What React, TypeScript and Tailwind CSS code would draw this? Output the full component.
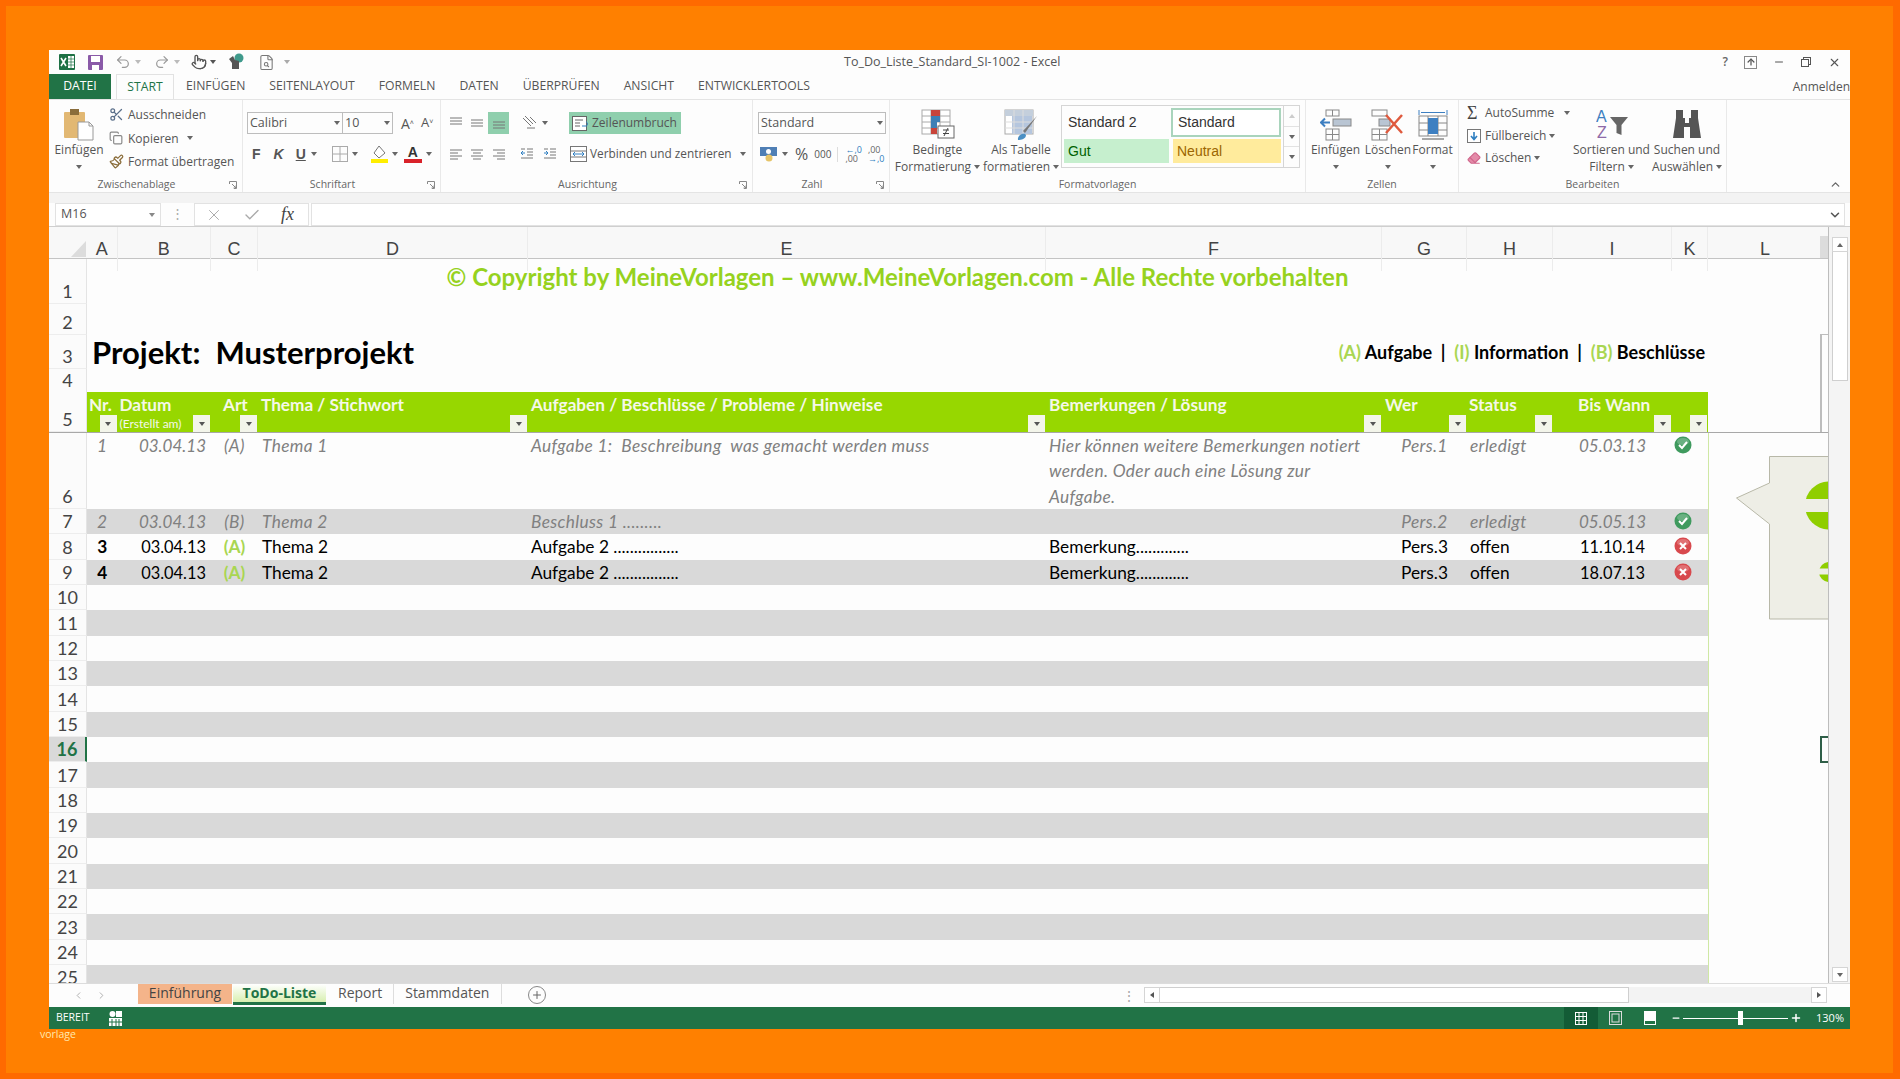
import React from "react";
import { Scissors, Copy, Paintbrush, FileSearch, Undo2, Redo2, Pointer, X, Check, ChevronUp, ChevronDown, Plus, Eraser, ChevronLeft, ChevronRight, Minus, ArrowUp } from "lucide-react";

const G = "grid grid-cols-[38px_30.5px_93.5px_47px_270px_518px_336px_85px_86px_119px_36px_121px]";

const Caret = ({ c = "#666", className = "" }: { c?: string; className?: string }) => (
  <svg width="6" height="4" viewBox="0 0 6 4" className={className}><path d="M0 0H6L3 4Z" fill={c} /></svg>
);

const Lines = ({ ys, x = [[1, 13]] }: { ys: number[]; x?: number[][] }) => (
  <svg width="14" height="14" viewBox="0 0 14 14" stroke="#777" strokeWidth="1" fill="none">
    {ys.map((y, i) => { const p = x[i % x.length]; return <path key={i} d={`M${p[0]} ${y}H${p[1]}`} />; })}
  </svg>
);

const Label = ({ t, exp = true }: { t: string; exp?: boolean }) => (
  <div className="flex h-[14px] items-center text-[10.5px] text-[#666]">
    <div className="flex-1 text-center">{t}</div>
    {exp && (
      <div className="flex w-[18px] justify-center">
        <svg width="8" height="8" viewBox="0 0 8 8" fill="none" stroke="#888"><path d="M0.5 3V0.5H7.5V7.5H5M3 3L7 7M4.5 7H7V4.5" /></svg>
      </div>
    )}
  </div>
);

const Big = ({ w, icon, a, b }: { w: string; icon: React.ReactNode; a: string; b?: string }) => (
  <div className={`${w} flex shrink-0 flex-col items-center whitespace-nowrap text-[12px] leading-[17px] text-[#555]`}>
    <div className="mt-[9px] flex h-[32px] items-start justify-center">{icon}</div>
    <div>{a}</div>
    {b ? <div className="flex items-center gap-[3px]">{b}<Caret /></div> : <div className="flex h-[17px] items-center"><Caret /></div>}
  </div>
);

const PasteIcon = () => (
  <svg width="30" height="32" viewBox="0 0 30 32">
    <rect x="0" y="3" width="21" height="26" rx="1" fill="#e2b873" />
    <rect x="6" y="0" width="9" height="6" fill="#8a6d3b" />
    <path d="M14 13H25L29 17V31H14Z" fill="#fff" stroke="#999" />
    <path d="M25 13V17H29" fill="none" stroke="#999" />
  </svg>
);

const CondIcon = () => (
  <svg width="34" height="30" viewBox="0 0 34 30">
    <g stroke="#aaa" fill="#fff"><rect x="1" y="1" width="28" height="24" /><path d="M10 1V25M19 1V25M1 7H29M1 13H29M1 19H29" fill="none" /></g>
    <rect x="10" y="1" width="9" height="6" fill="#c8443a" /><rect x="10" y="7" width="9" height="6" fill="#3c7fb5" /><rect x="10" y="13" width="6" height="6" fill="#3c7fb5" /><rect x="10" y="19" width="6" height="6" fill="#c8443a" />
    <rect x="17" y="17" width="16" height="12" fill="#fff" stroke="#666" /><path d="M22 21H28M22 24.5H28M27 19L23 27" stroke="#444" fill="none" />
  </svg>
);

const TableIcon = () => (
  <svg width="34" height="32" viewBox="0 0 34 32">
    <rect x="1" y="1" width="28" height="24" fill="#fff" stroke="#aaa" />
    <rect x="1" y="1" width="28" height="6" fill="#c4cfdc" />
    <rect x="8" y="7" width="20" height="18" fill="#b5c6de" />
    <path d="M10 1V25M19 1V25M1 13H29M1 19H29" stroke="#ddd" fill="none" />
    <path d="M33 7L21 24L19 22Z" fill="#777" />
    <path d="M14 31C13 26 20 23 22 26C22 30 17 31 14 31Z" fill="#4a8fc4" />
  </svg>
);

const InsIcon = () => (
  <svg width="32" height="32" viewBox="0 0 32 32" fill="none" stroke="#888">
    <rect x="6" y="1" width="13" height="6" /><path d="M12.5 1V7" />
    <rect x="6" y="20" width="13" height="11" /><path d="M12.5 20V31M6 25.5H19" />
    <path d="M10 13.5H1M5 9.5L1 13.5L5 17.5" stroke="#3d7fc1" strokeWidth="2" />
    <rect x="13" y="10" width="18" height="7" fill="#b9c5d3" />
  </svg>
);
const DelIcon = () => (
  <svg width="34" height="32" viewBox="0 0 34 32" fill="none" stroke="#888">
    <rect x="1" y="1" width="15" height="6" /><rect x="1" y="20" width="15" height="11" /><path d="M8.5 20V31M1 25.5H16" />
    <rect x="8" y="10" width="11" height="7" fill="#b9c5d3" />
    <path d="M15 6L31 24M31 6L15 24" stroke="#df5a3e" strokeWidth="2.5" />
  </svg>
);
const FmtIcon = () => (
  <svg width="30" height="32" viewBox="0 0 30 32" fill="none" stroke="#888">
    <path d="M1 1V6M29 1V6M3 3.5H27" stroke="#3d7fc1" />
    <rect x="1" y="7" width="28" height="20" /><path d="M1 14H29M1 21H29M10 7V27M20 7V27" />
    <rect x="10" y="9" width="10" height="16" fill="#3d7fc1" stroke="none" />
    <path d="M4 30H26" stroke="#555" />
  </svg>
);
const SortIcon = () => (
  <svg width="32" height="30" viewBox="0 0 32 30">
    <text x="0" y="13" fontSize="16" fontFamily="'Liberation Sans',sans-serif" fill="#3d7fc1">A</text>
    <text x="1" y="29" fontSize="16" fontFamily="'Liberation Sans',sans-serif" fill="#8e6aa8">Z</text>
    <path d="M14 8H32L25.5 16V26L20.5 24V16Z" fill="#666" />
  </svg>
);
const BinIcon = () => (
  <svg width="30" height="30" viewBox="0 0 30 30" fill="#555">
    <path d="M4 1H11V9H13V14H17V9H19V1H26V9L29 29H18V18H12V29H1L4 9Z" />
  </svg>
);

const Filter = () => (
  <div className="absolute bottom-0 right-[1px] flex h-[17px] w-[17px] items-center justify-center bg-[#f3f5ea]"><Caret c="#555" /></div>
);

const Status = ({ ok }: { ok: boolean }) => (
  <svg width="18" height="18" viewBox="0 0 18 18">
    <circle cx="9" cy="9" r="8.5" fill={ok ? "#3f9a5e" : "#d8494d"} />
    <ellipse cx="9" cy="5.5" rx="6" ry="3.6" fill="#fff" opacity=".22" />
    {ok ? <path d="M5 9L8 12L13 6" stroke="#fff" strokeWidth="2" fill="none" /> : <path d="M6 6L12 12M12 6L6 12" stroke="#fff" strokeWidth="2" fill="none" />}
  </svg>
);

const Num = ({ n }: { n: number }) => (
  <div className={`flex items-end justify-center border-b border-[#ededed] pb-[1px] text-[18px] leading-[22px] ${n === 16 ? "border-r-2 border-r-[#217346] bg-[#d9d9d9] font-bold text-[#217346]" : "border-r border-r-[#e4e4e4] bg-[#fbfbfb] text-[#444]"}`}>{n}</div>
);

const LCell = () => <div className="border-l border-[#cfe8a4]" />;

const DataRow = (p: { n: number; h: string; gray?: boolean; muted?: boolean; nr: string; date: string; art: string; thema: string; task: string; note: React.ReactNode; who: string; status: string; due: string; ok: boolean; tall?: boolean }) => {
  const align = p.tall ? "items-start" : "items-center";
  const tone = p.muted ? "italic text-[#808080] tracking-[0.35px]" : "text-black";
  const num = p.muted ? "text-[17px] tracking-normal" : "text-[16.4px]";
  return (
    <div className={`${G} ${p.h}`}>
      <Num n={p.n} />
      <div className={`col-span-10 grid grid-cols-subgrid text-[17.3px] leading-[25.4px] ${tone} ${p.gray ? "bg-[#d9d9d9]" : ""}`}>
        <div className={`flex justify-center ${align} ${p.muted ? "" : "font-bold"}`}>{p.nr}</div>
        <div className={`flex justify-end pr-[5px] ${num} ${align}`}>{p.date}</div>
        <div className={`flex justify-center ${align} ${p.muted ? "" : "font-bold text-[#a9d651]"}`}>{p.art}</div>
        <div className={`flex pl-[4px] ${align}`}>{p.thema}</div>
        <div className={`flex whitespace-pre pl-[3px] ${align}`}>{p.task}</div>
        <div className={`flex pl-[3px] ${align}`}><div>{p.note}</div></div>
        <div className={`flex justify-center ${align}`}>{p.who}</div>
        <div className={`flex pl-[3px] ${align}`}>{p.status}</div>
        <div className={`flex justify-center ${num} ${align}`}>{p.due}</div>
        <div className="flex items-start pl-[2px] pt-[3px]"><Status ok={p.ok} /></div>
      </div>
      <LCell />
    </div>
  );
};

const BLANK = [10, 11, 12, 13, 14, 15, 16, 17, 18, 19, 20, 21, 22, 23, 24, 25];

export default function App() {
  return (
    <div className="h-[1079px] w-[1900px] overflow-hidden border-[6px] border-r-[7px] border-[#ff6a00] bg-[#ff8000] pl-[43px] pt-[44px] font-['Open_Sans',sans-serif]">
      <div className="flex h-[979px] w-[1801px] flex-col bg-[#fdfdfd] text-[#555]">
        {/* Title bar */}
        <div className="relative flex h-[24px] shrink-0 items-center pl-[10px]">
          <svg width="16" height="16" viewBox="0 0 16 16"><rect width="16" height="16" rx="1" fill="#1e7145" /><rect x="9" y="2" width="6" height="12" fill="#fff" /><path d="M9 5H15M9 8H15M9 11H15M12 2V14" stroke="#1e7145" strokeWidth=".7" /><path d="M2 4L7 12M7 4L2 12" stroke="#fff" strokeWidth="1.6" /></svg>
          <svg className="ml-[13px]" width="15" height="15" viewBox="0 0 15 15"><rect width="15" height="15" rx="1" fill="#8a5aa8" /><rect x="3" y="1" width="9" height="6" fill="#fff" /><rect x="4" y="10" width="7" height="5" fill="#fff" /></svg>
          <Undo2 className="ml-[12px]" size={16} color="#999" strokeWidth={1.8} />
          <Caret c="#bbb" className="ml-[4px]" />
          <Redo2 className="ml-[13px]" size={16} color="#999" strokeWidth={1.8} />
          <Caret c="#bbb" className="ml-[4px]" />
          <Pointer className="ml-[11px]" size={16} color="#555" strokeWidth={2} />
          <Caret c="#555" className="ml-[3px]" />
          <svg className="ml-[11px]" width="18" height="18" viewBox="0 0 18 18"><circle cx="12" cy="5" r="4.5" fill="#3f9a8c" /><path d="M2 6L6 3L8 7L12 8V16H5V10Z" fill="#555" /></svg>
          <FileSearch className="ml-[13px]" size={17} color="#777" strokeWidth={1.5} />
          <Caret c="#aaa" className="ml-[9px]" />
          <div className="absolute left-[795px] whitespace-nowrap text-[12.5px] text-[#555]">To_Do_Liste_Standard_SI-1002 - Excel</div>
          <div className="ml-auto flex items-center pr-[9px]">
            <span className="mr-[16px] text-[12px] font-semibold text-[#666]">?</span>
            <div className="mr-[16px] flex h-[13px] w-[13px] items-center justify-center border border-[#888]"><ArrowUp size={10} color="#555" strokeWidth={3} /></div>
            <Minus size={12} color="#555" className="mr-[16px]" strokeWidth={2} />
            <svg className="mr-[17px]" width="10" height="10" viewBox="0 0 10 10" fill="#fdfdfd" stroke="#555"><rect x="2.5" y=".5" width="7" height="7" /><rect x=".5" y="2.5" width="7" height="7" /></svg>
            <X size={13} color="#555" strokeWidth={2} />
          </div>
        </div>
        {/* Tabs */}
        <div className="flex h-[25px] shrink-0 items-center text-[12.2px] text-[#555]">
          <div className="flex h-full w-[62px] items-center justify-center bg-[#217346] text-white">DATEI</div>
          <div className="ml-[5px] flex h-full w-[58px] items-center justify-center border border-b-0 border-[#e2e2e2] text-[#217346]">START</div>
          <div className="ml-[12px] flex items-center gap-[24px]">
            <span>EINFÜGEN</span><span>SEITENLAYOUT</span><span>FORMELN</span><span>DATEN</span><span>ÜBERPRÜFEN</span><span>ANSICHT</span><span>ENTWICKLERTOOLS</span>
          </div>
          <span className="ml-auto text-[12px]">Anmelden</span>
        </div>
        {/* Ribbon */}
        <div className="flex h-[94px] shrink-0 border-y border-[#e4e4e4] text-[12px]">
          {/* Zwischenablage */}
          <div className="flex w-[194px] flex-col border-r border-[#e9e9e9]">
            <div className="flex h-[78px]">
              <Big w="w-[60px]" icon={<PasteIcon />} a="Einfügen" />
              <div className="flex flex-col pt-[3px] text-[12px] leading-[23.5px]">
                <div className="flex items-center"><Scissors size={15} color="#5a6f8a" className="mr-[4px]" />Ausschneiden</div>
                <div className="flex items-center"><Copy size={14} color="#888" className="mr-[5px]" />Kopieren<Caret className="ml-[8px]" /></div>
                <div className="flex items-center"><Paintbrush size={15} color="#8a6d3b" className="mr-[4px]" />Format übertragen</div>
              </div>
            </div>
            <Label t="Zwischenablage" />
          </div>
          {/* Schriftart */}
          <div className="flex w-[198px] flex-col border-r border-[#e9e9e9]">
            <div className="h-[78px] pt-[12px]">
              <div className="flex h-[22px] items-center pl-[4px]">
                <div className="flex h-[22px] w-[96px] items-center justify-between border border-[#bdbdbd] px-[2px] text-[12.5px] text-[#555]">Calibri<Caret /></div>
                <div className="flex h-[22px] w-[50px] items-center justify-between border border-l-0 border-[#bdbdbd] px-[2px] text-[12.5px]">10<Caret /></div>
                <span className="ml-[8px] text-[14px]">A<sup className="text-[7px]">˄</sup></span>
                <span className="ml-[7px] text-[13px]">A<sup className="text-[7px]">˅</sup></span>
              </div>
              <div className="mt-[9px] flex h-[22px] items-center pl-[9px] font-['Liberation_Sans',sans-serif] text-[14px] font-bold text-[#555]">
                <span>F</span>
                <span className="ml-[13px] italic">K</span>
                <span className="ml-[12px] underline">U</span>
                <Caret className="ml-[5px]" />
                <svg className="ml-[15px]" width="16" height="16" viewBox="0 0 16 16" fill="none" stroke="#aaa"><rect x=".5" y=".5" width="15" height="15" /><path d="M8 0V16M0 8H16" /></svg>
                <Caret className="ml-[4px]" />
                <svg className="ml-[12px]" width="19" height="19" viewBox="0 0 19 19"><path d="M9 1L15 8L9 13L4 8Z" fill="#fff" stroke="#777" /><rect x="1" y="14" width="17" height="4" fill="#ffee00" /></svg>
                <Caret className="ml-[3px]" />
                <div className="ml-[6px] flex w-[18px] flex-col items-center text-[14px] leading-[14px] text-[#333]">A<div className="h-[4px] w-[18px] bg-[#d9222a]" /></div>
                <Caret className="ml-[4px]" />
              </div>
            </div>
            <Label t="Schriftart" />
          </div>
          {/* Ausrichtung */}
          <div className="flex w-[312px] flex-col border-r border-[#e9e9e9]">
            <div className="h-[78px] pt-[12px]">
              <div className="flex h-[22px] items-center pl-[8px]">
                <Lines ys={[2, 5, 8]} />
                <div className="ml-[7px]"><Lines ys={[4, 7, 10]} /></div>
                <div className="ml-[4px] flex h-[22px] w-[21px] items-center justify-center bg-[#8fcfad]"><Lines ys={[6, 9, 12]} /></div>
                <svg className="ml-[12px]" width="17" height="16" viewBox="0 0 17 16" fill="none" stroke="#777"><path d="M2 3L10 11M4 1L12 9M9 2L15 8M6 13L14 13" /></svg>
                <Caret className="ml-[4px]" />
                <div className="ml-[21px] flex h-[22px] w-[112px] items-center bg-[#8fcfad] pl-[3px] text-[12px]">
                  <svg width="18" height="15" viewBox="0 0 18 15" fill="#fff" stroke="#666" className="mr-[2px]"><rect x=".5" y=".5" width="14" height="14" /><path d="M3 4H11M3 7H8M3 10H8" fill="none" /><path d="M10 10H14C16 10 16 6 14 6" stroke="#2f7fc1" fill="none" /></svg>
                  Zeilenumbruch
                </div>
              </div>
              <div className="mt-[9px] flex h-[22px] items-center pl-[8px]">
                <Lines ys={[3, 6, 9, 12]} x={[[1, 13], [1, 9]]} />
                <div className="ml-[7px]"><Lines ys={[3, 6, 9, 12]} x={[[1, 13], [3, 11]]} /></div>
                <div className="ml-[8px]"><Lines ys={[3, 6, 9, 12]} x={[[1, 13], [5, 13]]} /></div>
                <svg className="ml-[14px]" width="14" height="14" viewBox="0 0 14 14" fill="none" stroke="#777"><path d="M7 2H13M7 5H13M7 8H13M1 11H13M1 2H5" /><path d="M5 6H1M3 4L1 6L3 8" stroke="#2f7fc1" /></svg>
                <svg className="ml-[9px]" width="14" height="14" viewBox="0 0 14 14" fill="none" stroke="#777"><path d="M7 2H13M7 5H13M7 8H13M1 11H13M1 2H5" /><path d="M1 6H5M3 4L5 6L3 8" stroke="#2f7fc1" /></svg>
                <svg className="ml-[13px]" width="17" height="16" viewBox="0 0 17 16" fill="#fff" stroke="#777"><rect x=".5" y=".5" width="16" height="15" /><path d="M0 5H17M0 11H17" /><path d="M3 8H14M5 6L3 8L5 10M12 6L14 8L12 10" stroke="#2f7fc1" fill="none" /></svg>
                <span className="ml-[3px] whitespace-nowrap text-[11.8px]">Verbinden und zentrieren</span>
                <Caret className="ml-[8px]" />
              </div>
            </div>
            <Label t="Ausrichtung" />
          </div>
          {/* Zahl */}
          <div className="flex w-[137px] flex-col border-r border-[#e9e9e9]">
            <div className="h-[78px] pt-[12px]">
              <div className="ml-[5px] flex h-[22px] w-[128px] items-center justify-between border border-[#bdbdbd] px-[2px] text-[12.5px]">Standard<Caret /></div>
              <div className="mt-[9px] flex h-[22px] items-center pl-[7px]">
                <svg width="17" height="16" viewBox="0 0 17 16"><rect y="1" width="17" height="9" fill="#4f7fb5" /><circle cx="8.5" cy="5.5" r="2.5" fill="#fff" /><circle cx="9" cy="12" r="3.5" fill="#e6c468" /></svg>
                <Caret className="ml-[5px]" />
                <span className="ml-[7px] text-[16px] leading-none">%</span>
                <span className="ml-[6px] text-[10px]">000</span>
                <div className="ml-[6px] h-[15px] w-px bg-[#ddd]" />
                <span className="ml-[7px] flex flex-col text-[9px] leading-[9px] text-[#2f7fc1]"><span>←,0</span><span className="text-[#666]">,00</span></span>
                <span className="ml-[6px] flex flex-col text-[9px] leading-[9px] text-[#666]"><span>,00</span><span className="text-[#2f7fc1]">→,0</span></span>
              </div>
            </div>
            <Label t="Zahl" />
          </div>
          {/* Formatvorlagen */}
          <div className="flex w-[416px] flex-col border-r border-[#e9e9e9]">
            <div className="flex h-[78px] pl-[4px]">
              <Big w="w-[87px]" icon={<CondIcon />} a="Bedingte" b="Formatierung" />
              <Big w="w-[80px]" icon={<TableIcon />} a="Als Tabelle" b="formatieren" />
              <div className="mt-[5px] flex h-[63px] w-[239px] border border-[#d5d5d5] font-['Liberation_Sans',sans-serif] text-[14px]">
                <div className="grid flex-1 grid-cols-[109px_110px] grid-rows-[29px_24px] gap-y-[2px] pt-[2px]">
                  <div className="flex items-center pl-[6px] text-[#333]">Standard 2</div>
                  <div className="flex items-center border-2 border-[#a9d4bc] bg-white pl-[5px] text-[#333]">Standard</div>
                  <div className="mx-[2px] flex items-center bg-[#c6efce] pl-[4px] text-[#006100]">Gut</div>
                  <div className="ml-[2px] flex items-center bg-[#ffeb9c] pl-[4px] text-[#9c6500]">Neutral</div>
                </div>
                <div className="flex w-[16px] flex-col border-l border-[#d5d5d5]">
                  <div className="flex flex-1 items-center justify-center border-b border-[#e2e2e2]"><Caret c="#ccc" className="rotate-180" /></div>
                  <div className="flex flex-1 items-center justify-center border-b border-[#e2e2e2]"><Caret /></div>
                  <div className="flex flex-1 items-center justify-center"><Caret /></div>
                </div>
              </div>
            </div>
            <Label t="Formatvorlagen" exp={false} />
          </div>
          {/* Zellen */}
          <div className="flex w-[153px] flex-col border-r border-[#e9e9e9]">
            <div className="flex h-[78px] pl-[4px]">
              <Big w="w-[51px]" icon={<InsIcon />} a="Einfügen" />
              <Big w="w-[54px]" icon={<DelIcon />} a="Löschen" />
              <Big w="w-[35px]" icon={<FmtIcon />} a="Format" />
            </div>
            <Label t="Zellen" exp={false} />
          </div>
          {/* Bearbeiten */}
          <div className="flex w-[268px] flex-col border-r border-[#e9e9e9]">
            <div className="flex h-[78px]">
              <div className="flex w-[114px] flex-col pl-[8px] pt-[2px] leading-[22.5px]">
                <div className="flex items-center"><span className="mr-[4px] w-[14px] font-['Liberation_Serif',serif] text-[18px] leading-none text-[#444]">Σ</span>AutoSumme<Caret className="ml-[10px]" /></div>
                <div className="flex items-center"><svg className="mr-[4px]" width="14" height="14" viewBox="0 0 14 14" fill="#fff" stroke="#777"><rect x=".5" y=".5" width="13" height="13" /><path d="M7 3V10M4 7L7 10.5L10 7" stroke="#2f7fc1" strokeWidth="1.6" fill="none" /></svg>Füllbereich<Caret className="ml-[3px]" /></div>
                <div className="flex items-center"><Eraser size={14} color="#d0678c" fill="#e48aa8" className="mr-[4px]" />Löschen<Caret className="ml-[3px]" /></div>
              </div>
              <Big w="w-[77px]" icon={<SortIcon />} a="Sortieren und" b="Filtern" />
              <Big w="w-[74px]" icon={<BinIcon />} a="Suchen und" b="Auswählen" />
            </div>
            <Label t="Bearbeiten" exp={false} />
          </div>
          <div className="flex flex-1 items-end justify-end pb-[1px] pr-[8px]"><ChevronUp size={13} color="#666" strokeWidth={2.4} /></div>
        </div>
        {/* Gap */}
        <div className="h-[10px] shrink-0 bg-[#f3f3f3]" />
        {/* Formula bar */}
        <div className="flex h-[24px] shrink-0 items-stretch border-b border-[#cfcfcf] pl-[6px] pr-[5px] text-[12.5px]">
          <div className="flex w-[106px] items-center justify-between border border-[#e2e2e2] bg-white px-[5px]">M16<Caret c="#888" /></div>
          <div className="flex w-[33px] items-center justify-center text-[#aaa]">⋮</div>
          <div className="flex w-[115px] items-center border border-[#e2e2e2] bg-white pl-[10px]">
            <X size={18} color="#aaa" strokeWidth={1.3} />
            <Check className="ml-[20px]" size={18} color="#aaa" strokeWidth={1.8} />
            <span className="ml-[20px] font-['Liberation_Serif',serif] text-[18px] italic text-[#444]">fx</span>
          </div>
          <div className="ml-[2px] flex flex-1 items-center justify-end border border-[#e2e2e2] bg-white pr-[2px]"><ChevronDown size={14} color="#555" strokeWidth={2.6} /></div>
        </div>
        {/* Sheet */}
        <div className="flex h-[756px] shrink-0">
          <div className="relative h-full w-[1780px] overflow-hidden border-r border-[#bdbdbd] font-['Lato',sans-serif]">
            {/* column letters */}
            <div className={`${G} h-[32px] border-b border-[#c4c4c4] bg-[#f8f8f8] font-['Liberation_Sans',sans-serif] text-[18px] leading-[44px] text-[#444]`}>
              <div className="flex justify-end pl-[10px]"><svg width="23" height="28" viewBox="0 0 23 28" className="mt-[3px]"><path d="M22 11V27H7Z" fill="#dcdcdc" /></svg></div>
              {["A", "B", "C", "D", "E", "F", "G", "H", "I", "K"].map((c) => (
                <div key={c} className="border-r border-[#ececec] text-center">{c}</div>
              ))}
              <div className="pr-[7px] text-center">L</div>
            </div>
            {/* Row 1 */}
            <div className={`${G} h-[45px]`}>
              <Num n={1} />
              <div className="col-span-10 text-center text-[24px] font-bold leading-[36px] text-[#96d21e]">© Copyright by MeineVorlagen – www.MeineVorlagen.com - Alle Rechte vorbehalten</div>
            </div>
            <div className={`${G} h-[31px]`}><Num n={2} /></div>
            {/* Row 3 */}
            <div className={`${G} h-[34px]`}>
              <Num n={3} />
              <div className="col-span-10 flex items-center justify-between pl-[5px] pr-[3px]">
                <div className="whitespace-pre text-[31px] font-bold leading-[34px] text-black">Projekt:  Musterprojekt</div>
                <div className="whitespace-pre text-[18px] font-bold text-black"><span className="text-[#a9d651]">(A)</span> Aufgabe  |  <span className="text-[#a9d651]">(I)</span> Information  |  <span className="text-[#a9d651]">(B)</span> Beschlüsse</div>
              </div>
            </div>
            <div className={`${G} h-[23px]`}><Num n={4} /></div>
            {/* Row 5 header */}
            <div className={`${G} h-[41px] border-b border-[#a8a8a8]`}>
              <Num n={5} />
              <div className="col-span-10 grid grid-cols-subgrid bg-[#97d700] text-[17.2px] font-bold leading-[26px] text-[#f5f8e8]">
                <div className="relative pl-[2px]">Nr.<Filter /></div>
                <div className="relative pl-[2px]">Datum<div className="text-[12px] font-normal leading-[12px]">(Erstellt am)</div><Filter /></div>
                <div className="relative pl-[12px]">Art<Filter /></div>
                <div className="relative pl-[3px]">Thema / Stichwort<Filter /></div>
                <div className="relative pl-[3px]">Aufgaben / Beschlüsse / Probleme / Hinweise<Filter /></div>
                <div className="relative pl-[3px]">Bemerkungen / Lösung<Filter /></div>
                <div className="relative pl-[3px]">Wer<Filter /></div>
                <div className="relative pl-[2px]">Status<Filter /></div>
                <div className="relative pl-[25px]">Bis Wann<Filter /></div>
                <div className="relative"><Filter /></div>
              </div>
            </div>
            <DataRow n={6} h="h-[76px]" tall muted nr="1" date="03.04.13" art="(A)" thema="Thema 1" task="Aufgabe 1:  Beschreibung  was gemacht werden muss" note={<>Hier können weitere Bemerkungen notiert<br />werden. Oder auch eine Lösung zur<br />Aufgabe.</>} who="Pers.1" status="erledigt" due="05.03.13" ok />
            <DataRow n={7} h="h-[25px]" gray muted nr="2" date="03.04.13" art="(B)" thema="Thema 2" task="Beschluss 1 ........." note="" who="Pers.2" status="erledigt" due="05.05.13" ok />
            <DataRow n={8} h="h-[26px]" nr="3" date="03.04.13" art="(A)" thema="Thema 2" task="Aufgabe 2 ................" note="Bemerkung............." who="Pers.3" status="offen" due="11.10.14" ok={false} />
            <DataRow n={9} h="h-[25px]" gray nr="4" date="03.04.13" art="(A)" thema="Thema 2" task="Aufgabe 2 ................" note="Bemerkung............." who="Pers.3" status="offen" due="18.07.13" ok={false} />
            {BLANK.map((n) => (
              <div key={n} className={`${G} h-[25.33px]`}>
                <Num n={n} />
                <div className={`col-span-10 ${n % 2 === 1 ? "bg-[#d9d9d9]" : ""}`} />
                <LCell />
              </div>
            ))}
            {/* Overlays: floating shapes and selection handles */}
            <svg className="absolute left-[1687px] top-[229px]" width="93" height="164" viewBox="0 0 93 164">
              <path d="M33.5 .5H93V163H33.5V68L.5 42L33.5 27Z" fill="#eeeee6" stroke="#b8b8a8" />
              <circle cx="93" cy="49.5" r="24" fill="#8fce00" />
              <rect x="60" y="43" width="33" height="13" fill="#eeeee6" />
              <circle cx="93" cy="116" r="10" fill="#8fce00" />
              <rect x="80" y="112.5" width="13" height="6" fill="#eeeee6" />
            </svg>
            <div className="absolute left-[1771px] top-[9px] h-[22px] w-[9px] bg-[#dcdcdc]" />
            <div className="absolute left-[1771px] top-[107px] h-[98px] w-[9px] border-l-2 border-t border-[#bdbdbd]" />
            <div className="absolute left-[1771px] top-[509px] h-[27px] w-[9px] border-2 border-r-0 border-[#2f5f48]" />
          </div>
          {/* Vertical scrollbar */}
          <div className="flex w-[21px] flex-col items-center bg-[#f4f4f4] pt-[10px]">
            <div className="flex h-[15px] w-[16px] items-center justify-center border border-[#d5d5d5] bg-white"><Caret className="rotate-180" /></div>
            <div className="h-[129px] w-[16px] border border-t-0 border-[#cfcfcf] bg-white" />
            <div className="mt-auto mb-[1px] flex h-[15px] w-[16px] items-center justify-center border border-[#d5d5d5] bg-white"><Caret /></div>
          </div>
        </div>
        {/* Sheet tabs */}
        <div className="flex h-[24px] shrink-0 items-start border-t border-[#dcdcdc] text-[14px] leading-[20px]">
          <div className="flex h-full w-[89px] items-center pl-[24px]">
            <ChevronLeft size={11} color="#aaa" />
            <ChevronRight size={11} color="#aaa" className="ml-[12px]" />
          </div>
          <div className="flex h-[20px] w-[94px] items-center justify-center bg-[#f4b48a] pb-[3px] text-[#444]">Einführung</div>
          <div className="ml-px flex h-[21px] w-[93px] items-center justify-center border-b-[3px] border-[#217346] bg-gradient-to-b from-white to-[#d8efb0] pb-[1px] font-bold text-[#217346]">ToDo-Liste</div>
          <div className="ml-[12px] flex h-[20px] items-center pb-[3px]">Report</div>
          <div className="ml-[11px] h-[20px] w-px bg-[#ddd]" />
          <div className="ml-[11px] flex h-[20px] items-center pb-[3px]">Stammdaten</div>
          <div className="ml-[12px] h-[20px] w-px bg-[#ddd]" />
          <div className="ml-[26px] mt-[2px] flex h-[18px] w-[18px] items-center justify-center rounded-full border border-[#888]"><Plus size={12} color="#666" /></div>
          <div className="ml-[576px] flex h-full items-center text-[#aaa]">⋮</div>
          <div className="ml-[8px] mt-[3px] flex h-[16px] w-[683px]">
            <div className="flex w-[16px] items-center justify-center border border-[#d5d5d5] bg-white"><Caret c="#555" className="rotate-90" /></div>
            <div className="w-[469px] border border-l-0 border-[#cfcfcf] bg-white" />
            <div className="flex-1 bg-[#f3f3f3]" />
            <div className="flex w-[16px] items-center justify-center border border-[#d5d5d5] bg-white"><Caret c="#555" className="-rotate-90" /></div>
          </div>
        </div>
        {/* Status bar */}
        <div className="flex h-[22px] shrink-0 items-center bg-[#217346] pl-[7px] text-[10.5px] text-white">
          <span>BEREIT</span>
          <svg className="ml-[19px]" width="13" height="15" viewBox="0 0 13 15" fill="#fff"><circle cx="3.5" cy="3" r="3" /><rect x="7" y="0" width="6" height="6" /><rect y="7" width="13" height="8" /><path d="M3 8V15M7 8V15M10 8V15M0 11H13" stroke="#217346" /></svg>
          <div className="ml-auto flex h-full items-center pr-[6px]">
            <div className="flex h-full w-[34px] items-center justify-center bg-[#135c36]">
              <svg width="12" height="13" viewBox="0 0 12 13" fill="none" stroke="#fff"><rect x=".5" y=".5" width="11" height="12" /><path d="M4 0V13M8 0V13M0 4.5H12M0 8.5H12" /></svg>
            </div>
            <svg className="ml-[11px]" width="13" height="14" viewBox="0 0 13 14" fill="none" stroke="#ddd"><rect x=".5" y=".5" width="12" height="13" /><rect x="3" y="3" width="7" height="8" /></svg>
            <svg className="ml-[22px]" width="12" height="14" viewBox="0 0 12 14" fill="#fff"><path d="M0 0H12V14H0ZM1 10V13H11V10Z" /></svg>
            <Minus className="ml-[15px]" size={10} color="#fff" strokeWidth={3} />
            <div className="relative ml-[2px] flex h-[1px] w-[105px] items-center bg-white">
              <div className="absolute left-[55px] h-[14px] w-[5px] bg-white" />
            </div>
            <Plus className="ml-[2px]" size={12} color="#fff" strokeWidth={3} />
            <span className="ml-[14px] text-[11px]">130%</span>
          </div>
        </div>
      </div>
      <div className="-ml-[9px] text-[10.5px] leading-[10px] text-[#ffe9b0]">vorlage</div>
    </div>
  );
}
